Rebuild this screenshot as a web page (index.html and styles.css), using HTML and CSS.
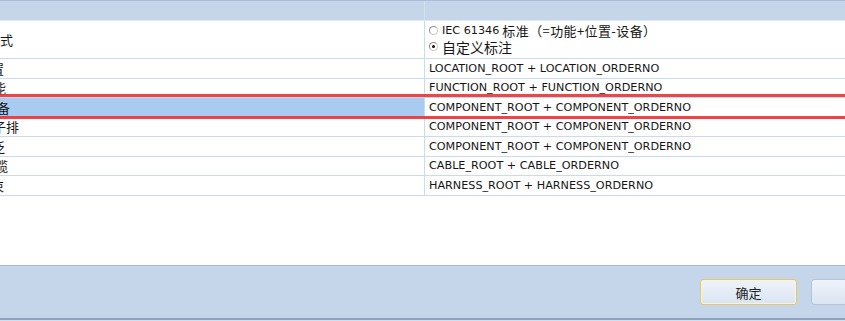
FILE: index.html
```html
<!DOCTYPE html>
<html lang="zh-CN">
<head>
  <meta charset="UTF-8" />
  <meta name="viewport" content="width=device-width, initial-scale=1.0"/>
  <title>标注设置</title>
  <link rel="stylesheet" href="styles.css">
</head>
<body>
  <div class="window">
    <div class="head">
      <div class="head-key"></div>
      <div class="head-val"></div>
    </div>

    <div class="grid">
      <div class="row row-tall">
        <div class="key"><span class="lbl lbl-mode">标注方式</span></div>
        <div class="val val-radios">
          <div class="opt"><span class="radio"></span>IEC 61346 <span class="cjk">标准（=功能+位置-设备）</span></div>
          <div class="opt opt-big"><span class="radio checked"></span>自定义标注</div>
        </div>
      </div>
      <div class="row">
        <div class="key"><span class="lbl lbl-loc">位置</span></div>
        <div class="val">LOCATION_ROOT + LOCATION_ORDERNO</div>
      </div>
      <div class="row">
        <div class="key"><span class="lbl lbl-func">功能</span></div>
        <div class="val">FUNCTION_ROOT + FUNCTION_ORDERNO</div>
      </div>
      <div class="row row-selected">
        <div class="key"><span class="lbl lbl-dev">设备</span></div>
        <div class="val">COMPONENT_ROOT + COMPONENT_ORDERNO</div>
      </div>
      <div class="row">
        <div class="key"><span class="lbl lbl-term">端子排</span></div>
        <div class="val">COMPONENT_ROOT + COMPONENT_ORDERNO</div>
      </div>
      <div class="row">
        <div class="key"><span class="lbl lbl-plug">泛</span></div>
        <div class="val">COMPONENT_ROOT + COMPONENT_ORDERNO</div>
      </div>
      <div class="row">
        <div class="key"><span class="lbl lbl-cable">电缆</span></div>
        <div class="val">CABLE_ROOT + CABLE_ORDERNO</div>
      </div>
      <div class="row">
        <div class="key"><span class="lbl lbl-loc">线束</span></div>
        <div class="val">HARNESS_ROOT + HARNESS_ORDERNO</div>
      </div>
    </div>

    <div class="blank"></div>

    <div class="foot">
      <button class="btn btn-default">确定</button>
      <button class="btn btn-cut">取消</button>
    </div>

    <!-- red annotation frame around the selected row -->
    <div class="mark"></div>
  </div>
</body>
</html>
```

FILE: styles.css
```css
* {
  box-sizing: border-box;
}

body {
  margin: 0;
  background-color: #d3dfee;
  font-family: "DejaVu Sans", "Noto Sans CJK SC", sans-serif;
  color: #161616;
  overflow: hidden;
}

.window {
  position: relative;
  width: 845px;
  height: 321px;
  display: flex;
  flex-direction: column;
  overflow: hidden;
}

.head {
  height: 21px;
  display: flex;
  background-color: #c6d6ea;
  border-top: 1px solid #aabdd6;
  border-bottom: 1px solid #dfe8f4;
}

.head-key {
  width: 424px;
}

.head-val {
  flex: 1;
  border-left: 1px solid #d4e0ef;
}

.grid {
  background-color: #fff;
}

.row {
  display: flex;
  height: 19.5px;
  border-bottom: 1px solid #ccdaed;
}

.row-tall {
  height: 38px;
}

.key {
  width: 424px;
  overflow: hidden;
  display: flex;
  align-items: center;
  font-family: "Noto Sans CJK SC", sans-serif;
  font-size: 13px;
  white-space: nowrap;
}

.lbl {
  line-height: 1;
}

.lbl-mode { margin-left: -39px; }
.lbl-loc { margin-left: -22px; }
.lbl-func { margin-left: -20px; }
.lbl-dev { margin-left: -16px; }
.lbl-term { margin-left: -20px; }
.lbl-plug { margin-left: -8px; }
.lbl-cable { margin-left: -18px; }

.row-selected .key {
  background-color: #a9cbf0;
}

.val {
  flex: 1;
  border-left: 1px solid #ccdaed;
  padding-left: 4px;
  display: flex;
  align-items: center;
  font-size: 11.2px;
  white-space: nowrap;
}

.val-radios {
  flex-direction: column;
  align-items: flex-start;
  justify-content: center;
  gap: 0;
  padding-bottom: 2px;
}

.opt {
  display: flex;
  align-items: center;
  height: 16px;
  font-size: 11.2px;
}

.cjk {
  font-family: "Noto Sans CJK SC", sans-serif;
  font-size: 13px;
  margin-left: 3px;
  text-spacing-trim: space-all;
  letter-spacing: 0.4px;
}

.opt-big {
  font-size: 14px;
  font-family: "Noto Sans CJK SC", sans-serif;
}

.radio {
  width: 9px;
  height: 9px;
  margin-right: 4px;
  border-radius: 50%;
  border: 1px solid #8e8e8e;
  border-right-color: #c9c9c9;
  border-bottom-color: #c9c9c9;
  background-color: #fff;
  display: flex;
  align-items: center;
  justify-content: center;
}

.radio.checked::after {
  content: "";
  width: 3px;
  height: 3px;
  border-radius: 50%;
  background-color: #111;
}

.blank {
  flex: 1;
  background-color: #fff;
}

.foot {
  height: 55px;
  display: flex;
  justify-content: flex-end;
  align-items: flex-start;
  gap: 14px;
  padding-top: 13px;
  background-color: #c6d6ea;
  border-top: 1px solid #a6b9d2;
  border-bottom: 2px solid #8fa3bd;
  margin-bottom: 1px;
}

.btn {
  width: 97px;
  height: 26px;
  border-radius: 3px;
  border: 1px solid #b3c3d8;
  background: linear-gradient(#eef3fa, #dae5f2);
  font-family: "Noto Sans CJK SC", sans-serif;
  font-size: 13px;
  color: #222;
  padding: 0;
}

.btn-default {
  border-color: #e6c66a;
  box-shadow: inset 0 0 0 1px #fbf3d6;
}

.btn-cut {
  margin-right: -63px;
}

.mark {
  position: absolute;
  top: 94px;
  left: -6px;
  right: -6px;
  height: 25px;
  border: 3px solid rgba(238, 52, 56, 0.92);
  pointer-events: none;
}
```
